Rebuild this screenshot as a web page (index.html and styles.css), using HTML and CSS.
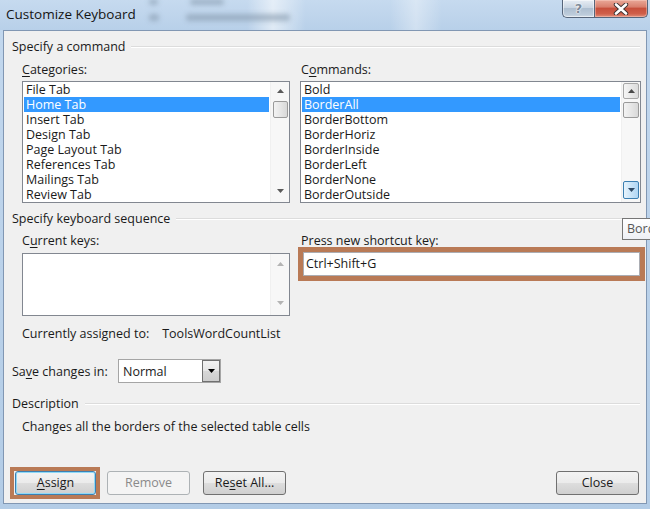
FILE: index.html
```html
<!DOCTYPE html>
<html>
<head>
<meta charset="utf-8">
<title>Customize Keyboard</title>
<link rel="stylesheet" href="styles.css">
</head>
<body>
<div class="titlebar">
  <div class="blur"><i class="bl bl1"></i><i class="bl bl2"></i><i class="bl bl3"></i><i class="bl bl4"></i></div>
  <div class="title">Customize Keyboard</div>
  <div class="caption">
    <div class="cbtn help"><span class="q">?</span></div>
    <div class="cbtn close">
      <svg width="16" height="12" viewBox="0 0 16 12">
        <path d="M3 1.5 L13 10.5 M13 1.5 L3 10.5" stroke="#3a3030" stroke-width="4.4" stroke-linecap="round"/>
        <path d="M3 1.5 L13 10.5 M13 1.5 L3 10.5" stroke="#ffffff" stroke-width="2.6" stroke-linecap="round"/>
      </svg>
    </div>
  </div>
</div>

<div class="dialog">
  <div class="group-head"><span>Specify a command</span></div>

  <div class="two-col cmd-row">
    <div class="col left">
      <div class="label"><u>C</u>ategories:</div>
      <div class="listbox tall">
        <div class="items">
          <div class="item">File Tab</div>
          <div class="item sel">Home Tab</div>
          <div class="item">Insert Tab</div>
          <div class="item">Design Tab</div>
          <div class="item">Page Layout Tab</div>
          <div class="item">References Tab</div>
          <div class="item">Mailings Tab</div>
          <div class="item">Review Tab</div>
        </div>
        <div class="vscroll plain">
          <div class="arrow"><svg width="7" height="4" viewBox="0 0 7 4"><polygon points="0,4 3.5,0 7,4" fill="#5a5a5a"/></svg></div>
          <div class="thumb"></div>
          <div class="track"></div>
          <div class="arrow down"><svg width="7" height="4" viewBox="0 0 7 4"><polygon points="0,0 7,0 3.5,4" fill="#5a5a5a"/></svg></div>
        </div>
      </div>
    </div>
    <div class="col right">
      <div class="label label-r">C<u>o</u>mmands:</div>
      <div class="listbox tall wide">
        <div class="items">
          <div class="item">Bold</div>
          <div class="item sel">BorderAll</div>
          <div class="item">BorderBottom</div>
          <div class="item">BorderHoriz</div>
          <div class="item">BorderInside</div>
          <div class="item">BorderLeft</div>
          <div class="item">BorderNone</div>
          <div class="item">BorderOutside</div>
        </div>
        <div class="vscroll boxed">
          <div class="sbtn"><svg width="7" height="4" viewBox="0 0 7 4"><polygon points="0,4 3.5,0 7,4" fill="#4a4a4a"/></svg></div>
          <div class="thumb"></div>
          <div class="track"></div>
          <div class="sbtn hot"><svg width="7" height="4" viewBox="0 0 7 4"><polygon points="0,0 7,0 3.5,4" fill="#2f4a66"/></svg></div>
        </div>
      </div>
    </div>
  </div>

  <div class="group-head g2"><span>Specify keyboard sequence</span></div>

  <div class="two-col key-row">
    <div class="col left">
      <div class="label">C<u>u</u>rrent keys:</div>
      <div class="listbox short">
        <div class="items"></div>
        <div class="vscroll plain dis">
          <div class="arrow"><svg width="7" height="4" viewBox="0 0 7 4"><polygon points="0,4 3.5,0 7,4" fill="#b4b4b4"/></svg></div>
          <div class="track"></div>
          <div class="arrow down"><svg width="7" height="4" viewBox="0 0 7 4"><polygon points="0,0 7,0 3.5,4" fill="#b4b4b4"/></svg></div>
        </div>
      </div>
    </div>
    <div class="col right">
      <div class="label label-r">Press new shortcut key:</div>
      <div class="mark wide-mark">
        <div class="textbox">Ctrl+Shift+G</div>
      </div>
    </div>
  </div>

  <div class="assigned"><span>Currently assigned to:</span><span class="val">ToolsWordCountList</span></div>

  <div class="save-row">
    <span class="save-label">Sa<u>v</u>e changes in:</span>
    <div class="combo">
      <span class="combo-text">Normal</span>
      <span class="combo-btn"><svg width="7" height="4" viewBox="0 0 7 4"><polygon points="0,0 7,0 3.5,4" fill="#000"/></svg></span>
    </div>
  </div>

  <div class="group-head g3"><span>Description</span></div>
  <div class="desc">Changes all the borders of the selected table cells</div>

  <div class="buttons">
    <div class="mark btn-mark"><div class="btn default"><u>A</u>ssign</div></div>
    <div class="btn disabled">Remove</div>
    <div class="btn reset">Re<u>s</u>et All...</div>
    <div class="btn close-btn">Close</div>
  </div>
</div>

<div class="tooltip"><span class="tip-text">BorderAll</span></div>
</body>
</html>
```
FILE: styles.css
```css
html, body {
  margin: 0;
  padding: 0;
  overflow: hidden;
}

body {
  width: 650px;
  height: 509px;
  position: relative;
  background: linear-gradient(180deg, #c3d8ee 0%, #b3cce6 100%);
  font-family: "Open Sans", "Noto Sans", sans-serif;
  font-size: 12.5px;
  color: #1a1a1a;
}

u {
  text-decoration: underline;
  text-underline-offset: 2px;
}

/* ---------- title bar ---------- */
.titlebar {
  height: 30px;
  display: flex;
  align-items: flex-start;
  position: relative;
  overflow: hidden;
  background:
    linear-gradient(90deg, rgba(255,255,255,0) 0%, rgba(255,255,255,0) 38%, rgba(255,255,255,0.55) 42%, rgba(255,255,255,0) 47%, rgba(255,255,255,0) 60%, rgba(255,255,255,0.35) 64%, rgba(255,255,255,0) 68%),
    linear-gradient(180deg, #c6daef 0%, #b8d0e9 100%);
}

.blur {
  position: absolute;
  left: 0;
  top: 0;
  width: 650px;
  height: 30px;
  filter: blur(2.6px);
}

.bl {
  position: absolute;
  display: block;
  background: #8699ae;
  border-radius: 3px;
  opacity: 0.6;
}

.bl1 { left: 190px; top: -1px; width: 34px; height: 6px; }
.bl2 { left: 186px; top: 14px; width: 104px; height: 7px; }
.bl3 { left: 149px; top: -1px; width: 9px; height: 6px; }
.bl4 { left: 149px; top: 14px; width: 10px; height: 7px; }

.title {
  position: relative;
  margin: 4px 0 0 6px;
  font-size: 13.5px;
  line-height: 20px;
  color: #141414;
}

.caption {
  position: relative;
  margin-left: auto;
  margin-right: 2px;
  display: flex;
}

.cbtn {
  height: 18px;
  box-sizing: border-box;
  display: flex;
  align-items: center;
  justify-content: center;
  border: 1px solid #56657a;
  border-top: none;
}

.help {
  width: 32px;
  border-right: none;
  border-radius: 0 0 0 5px;
  background: linear-gradient(180deg, #e7edf4 0%, #c9d5e2 45%, #aebfd1 50%, #bccbda 85%, #d2dde8 100%);
  box-shadow: inset 0 0 0 1px rgba(255,255,255,0.5);
}

.q {
  font-family: "DejaVu Sans", sans-serif;
  font-weight: bold;
  font-size: 13px;
  line-height: 14px;
  color: #7d8a99;
  text-shadow: 0 0 1px #fff, 0 0 1px #fff, 0 0 2px #fff;
}

.close {
  width: 54px;
  border-radius: 0 0 5px 0;
  background: linear-gradient(180deg, #e9a898 0%, #d9806e 40%, #c7503c 50%, #cf5e49 80%, #e08d79 100%);
  box-shadow: inset 0 0 0 1px rgba(255,220,210,0.4);
}

/* ---------- dialog ---------- */
.dialog {
  margin-left: 3px;
  width: 644px;
  height: 474px;
  box-sizing: border-box;
  border: 1px solid #8197b3;
  background: #f0f0f0;
  display: flex;
  flex-direction: column;
}

.group-head {
  display: flex;
  align-items: center;
  margin: 8px 6px 0 8px;
  height: 16px;
  line-height: 16px;
}

.group-head::after {
  content: "";
  flex: 1;
  margin-left: 6px;
  height: 1px;
  background: #dcdcdc;
  border-bottom: 1px solid #ffffff;
}

.g2 { margin-top: 8px; }
.g3 { margin-top: 13px; }

.two-col {
  display: flex;
  gap: 10px;
  padding-left: 18px;
}

.col {
  display: flex;
  flex-direction: column;
}

.col.left { width: 268px; }
.col.right { width: 341px; }

.label {
  line-height: 16px;
  height: 16px;
}

.cmd-row { margin-top: 7px; }
.cmd-row .label { margin-bottom: 3px; }

.key-row { margin-top: 6px; }
.key-row .left .label { margin-bottom: 4px; }
.label-r { padding-left: 1px; }

/* ---------- list boxes ---------- */
.listbox {
  box-sizing: border-box;
  border: 1px solid #828790;
  background: #ffffff;
  display: flex;
}

.listbox.tall { height: 122px; }
.listbox.short { height: 63px; }

.items {
  flex: 1;
  padding: 0 1px;
  overflow: hidden;
}

.item {
  height: 15px;
  line-height: 15px;
  padding-left: 2px;
  white-space: nowrap;
}

.item.sel {
  background: #3399ff;
  color: #ffffff;
}

.vscroll {
  width: 18px;
  display: flex;
  flex-direction: column;
  align-items: center;
  background: #f7f7f7;
  border-left: 1px solid #f0f0f0;
}

.vscroll .track { flex: 1; }

.arrow {
  height: 17px;
  width: 17px;
  display: flex;
  align-items: center;
  justify-content: center;
}

.plain .arrow.down { margin-bottom: 3px; }
.dis .arrow { height: 20px; }
.dis .arrow.down { margin-bottom: 2px; }

.thumb {
  width: 15px;
  height: 17px;
  box-sizing: border-box;
  border: 1px solid #9a9a9a;
  border-radius: 2px;
  background: linear-gradient(90deg, #f3f3f3 0%, #e6e6e6 50%, #d8d8d8 100%);
  margin-top: 2px;
}

.boxed {
  padding: 1px 0;
}

.sbtn {
  width: 16px;
  height: 16px;
  box-sizing: border-box;
  border: 1px solid #a7a7a7;
  border-radius: 2px;
  background: linear-gradient(90deg, #f5f5f5 0%, #e8e8e8 50%, #dcdcdc 100%);
  display: flex;
  align-items: center;
  justify-content: center;
}

.boxed .thumb { width: 16px; margin-top: 3px; height: 16px; }

.sbtn.hot {
  height: 18px;
  margin-bottom: 2px;
  border-color: #3c7fb1;
  background: linear-gradient(90deg, #e8f4fc 0%, #c9e4f8 50%, #b0d6f4 100%);
}

/* ---------- highlight marks ---------- */
.mark {
  box-sizing: border-box;
  border: 5px solid #b97a56;
}

.wide-mark {
  margin-top: -2px;
  margin-left: -2px;
  width: 347px;
}

.textbox {
  box-sizing: border-box;
  height: 24px;
  border: 1px solid #abadb3;
  background: #ffffff;
  line-height: 22px;
  padding-left: 2px;
}

/* ---------- assigned / save ---------- */
.assigned {
  margin-top: 10px;
  padding-left: 18px;
  line-height: 16px;
}

.assigned .val { margin-left: 13px; }

.save-row {
  margin-top: 17px;
  padding-left: 8px;
  display: flex;
  align-items: center;
  height: 24px;
}

.save-label { width: 106px; }

.combo {
  width: 103px;
  height: 24px;
  box-sizing: border-box;
  border: 1px solid #a5a5a5;
  background: #ffffff;
  display: flex;
  align-items: center;
}

.combo-text {
  flex: 1;
  padding-left: 4px;
}

.combo-btn {
  width: 18px;
  height: 22px;
  box-sizing: border-box;
  border: 1px solid #707070;
  background: linear-gradient(180deg, #f2f2f2 0%, #e6e6e6 50%, #d7d7d7 51%, #cdcdcd 100%);
  display: flex;
  align-items: center;
  justify-content: center;
}

.desc {
  margin-top: 7px;
  padding-left: 18px;
  line-height: 16px;
}

/* ---------- buttons ---------- */
.buttons {
  margin-top: 32px;
  padding: 0 7px 0 6px;
  display: flex;
  align-items: center;
}

.btn {
  width: 83px;
  height: 24px;
  box-sizing: border-box;
  border: 1px solid #707070;
  border-radius: 3px;
  background: linear-gradient(180deg, #f3f3f3 0%, #ebebeb 48%, #dddddd 52%, #cfcfcf 100%);
  display: flex;
  align-items: center;
  justify-content: center;
  line-height: 16px;
}

.btn-mark {
  width: 90px;
  border-width: 4px;
  padding-left: 1px;
}

.btn.default {
  width: 81px;
  border-color: #3c7fb1;
  box-shadow: inset 0 0 0 1px #8fd9f7;
}

.btn.disabled {
  margin-left: 7px;
  border-color: #adb2b5;
  background: #f4f4f4;
  color: #8a8a8a;
}

.btn.reset { margin-left: 13px; }

.btn.close-btn { margin-left: auto; }

/* ---------- tooltip (overlay) ---------- */
.tooltip {
  position: absolute;
  left: 622px;
  top: 218px;
  width: 30px;
  height: 22px;
  overflow: hidden;
  box-sizing: border-box;
  padding-left: 4px;
  border: 1px solid #767676;
  border-right: none;
  background: linear-gradient(180deg, #ffffff, #eef0f5);
  color: #575757;
  line-height: 20px;
  white-space: nowrap;
}
```
